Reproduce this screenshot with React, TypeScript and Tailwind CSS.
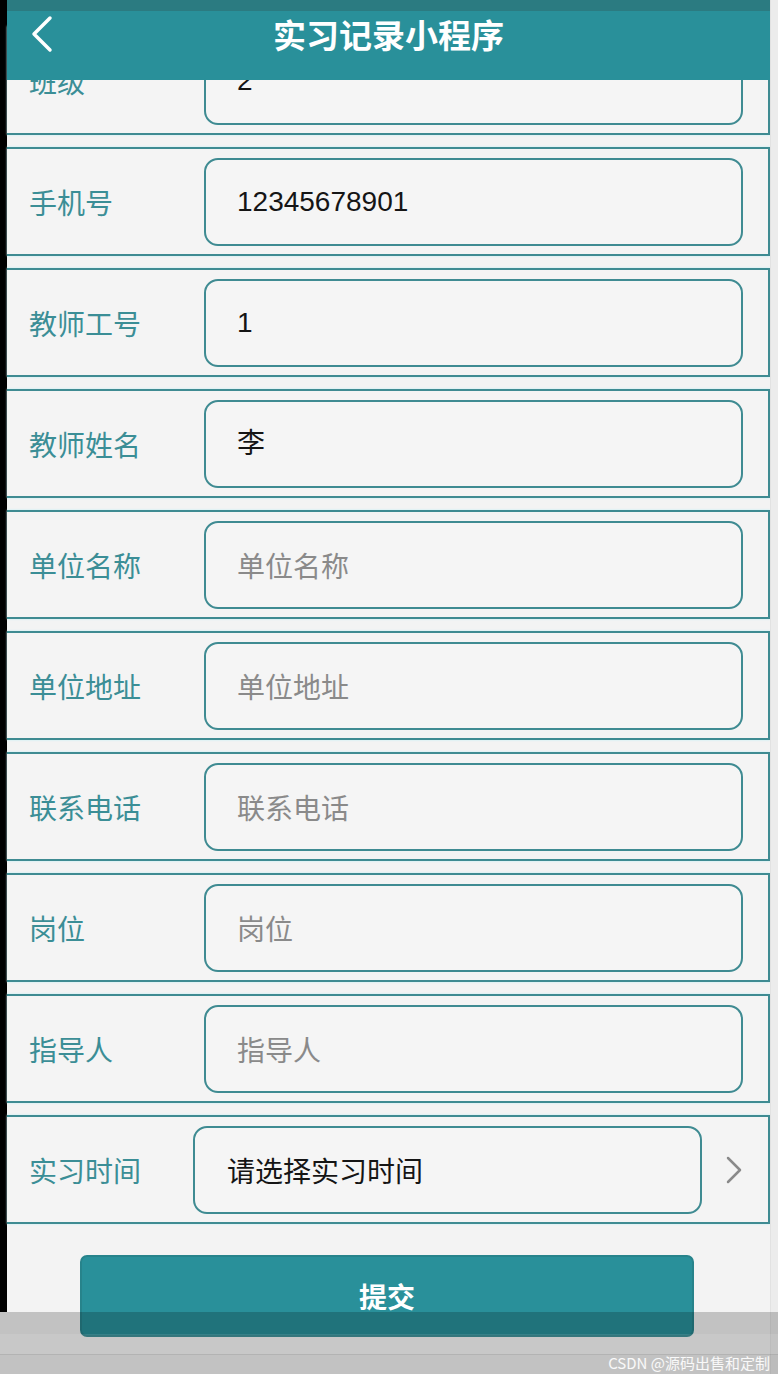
const font = { fontFamily: '"Noto Sans CJK SC", "Liberation Sans", sans-serif' };

type Field = { label: string; value?: string; placeholder?: string };

const fields: Field[] = [
  { label: '班级', value: '2' },
  { label: '手机号', value: '12345678901' },
  { label: '教师工号', value: '1' },
  { label: '教师姓名', value: '李' },
  { label: '单位名称', placeholder: '单位名称' },
  { label: '单位地址', placeholder: '单位地址' },
  { label: '联系电话', placeholder: '联系电话' },
  { label: '岗位', placeholder: '岗位' },
  { label: '指导人', placeholder: '指导人' },
];

const Row = ({ field }: { field: Field }) => (
  <div className="h-[109px] flex items-center border-y-2 border-r-2 border-[#3f8b92] bg-[#f4f4f4] pl-[22px] pr-[25px] shadow-[0_0_2px_#bff0f4]">
    <div className="w-[175px] text-[28px] leading-none text-[#3b8e96]">{field.label}</div>
    <div className="flex-1 h-[88px] flex items-center rounded-[14px] border-2 border-[#3f8b92] bg-[#f5f5f5] pl-[31px] leading-none">
      {field.value ? (
        <span className="text-[#151515] text-[28px]" style={{ fontFamily: '"Liberation Sans", "Noto Sans CJK SC", sans-serif' }}>
          {field.value}
        </span>
      ) : (
        <span className="text-[#8a8a8a] text-[28px]">{field.placeholder}</span>
      )}
    </div>
  </div>
);

export default function App() {
  return (
    <div className="relative w-[778px] h-[1374px] bg-[#f3f3f3] overflow-hidden flex" style={font}>
      <div className="w-[7px] h-[1312px] bg-black shrink-0 self-start" />

      <div className="w-[763px] flex flex-col">
        <div className="relative z-10 h-[80px] flex flex-col">
          <div className="h-[11px] bg-[#2b7b81]" />
          <div className="flex-1 bg-[#29909a] relative flex justify-center pt-[4px]">
            <svg
              className="absolute left-[22px] top-[4px]"
              width="26"
              height="38"
              viewBox="0 0 26 38"
              fill="none"
              stroke="white"
              strokeWidth="3.5"
              strokeLinecap="round"
              strokeLinejoin="round"
            >
              <path d="M21 3 L5 19 L21 35" />
            </svg>
            <span className="text-white text-[33px] font-bold leading-[38px]">实习记录小程序</span>
          </div>
        </div>

        <div className="-mt-[54px] flex flex-col gap-[12px]">
          {fields.map((f) => (
            <Row key={f.label} field={f} />
          ))}
          <div className="h-[109px] flex items-center border-y-2 border-r-2 border-[#3f8b92] bg-[#f4f4f4] pl-[22px] pr-[26px] shadow-[0_0_2px_#bff0f4]">
            <div className="w-[164px] shrink-0 text-[28px] leading-none text-[#3b8e96]">实习时间</div>
            <div className="w-[509px] shrink-0 h-[88px] flex items-center rounded-[14px] border-2 border-[#3f8b92] bg-[#f5f5f5] pl-[32px] text-[28px] leading-none text-[#151515]">
              请选择实习时间
            </div>
            <svg className="ml-[23px] shrink-0" width="18" height="28" viewBox="0 0 18 28" fill="none" stroke="#8a8a8a" strokeWidth="2.5" strokeLinecap="round" strokeLinejoin="round">
              <path d="M3 2 L15 14 L3 26" />
            </svg>
          </div>
        </div>

        <div className="mt-[31px] ml-[73px] w-[614px] h-[82px] rounded-[7px] bg-[#29909a] border-2 border-[#27838b] flex items-center justify-center">
          <span className="text-white text-[28px] font-bold leading-none">提交</span>
        </div>
      </div>

      <div className="w-[8px] shrink-0 bg-[#ececec] border-l border-[#e2e2e2]" />

      <div className="absolute left-0 right-0 bottom-0 h-[62px] bg-black/20 flex flex-col">
        <div className="h-[22px]" />
        <div className="h-[21px] bg-white/10 border-b border-black/10" />
        <div className="flex-1 flex items-end justify-end pr-[8px] pb-[4px]">
          <span className="text-[15px] leading-none text-white/90" style={{ fontFamily: '"Noto Sans CJK SC", sans-serif' }}>
            CSDN @源码出售和定制
          </span>
        </div>
      </div>
    </div>
  );
}
